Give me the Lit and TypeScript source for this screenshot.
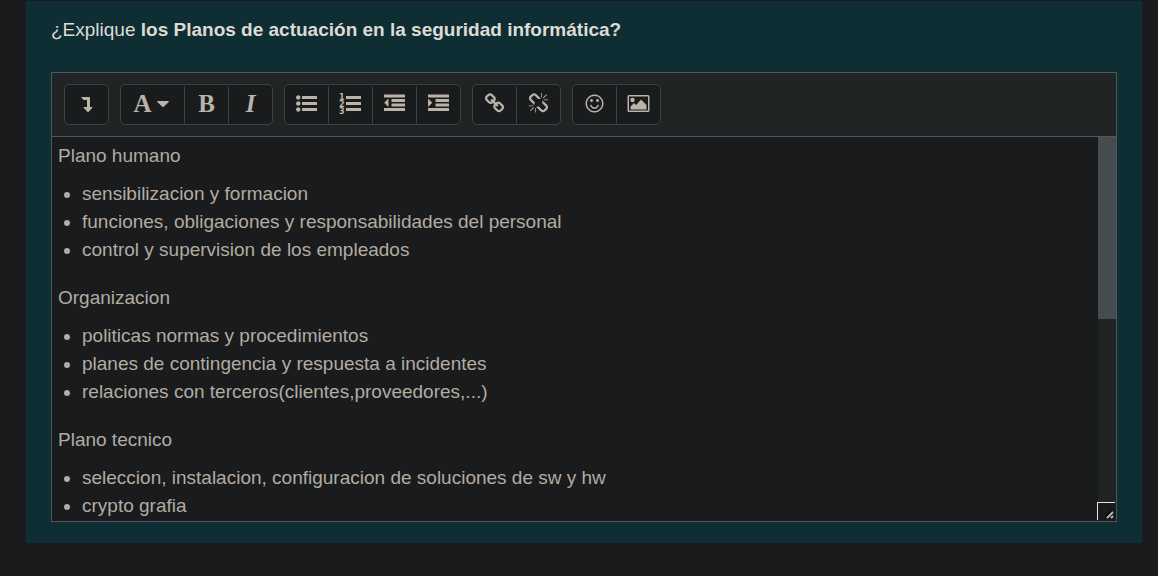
import { LitElement, html, css, svg } from "lit";
import { customElement } from "lit/decorators.js";

const BARS =
  "M1792 1312v192q0 13-9.5 22.5t-22.5 9.5h-1728q-13 0-22.5-9.5t-9.5-22.5v-192q0-13 9.5-22.5t22.5-9.5h1728q13 0 22.5 9.5t9.5 22.5zm0-384v192q0 13-9.5 22.5t-22.5 9.5h-1088q-13 0-22.5-9.5t-9.5-22.5v-192q0-13 9.5-22.5t22.5-9.5h1088q13 0 22.5 9.5t9.5 22.5zm0-384v192q0 13-9.5 22.5t-22.5 9.5h-1088q-13 0-22.5-9.5t-9.5-22.5v-192q0-13 9.5-22.5t22.5-9.5h1088q13 0 22.5 9.5t9.5 22.5zm0-384v192q0 13-9.5 22.5t-22.5 9.5h-1728q-13 0-22.5-9.5t-9.5-22.5v-192q0-13 9.5-22.5t22.5-9.5h1728q13 0 22.5 9.5t9.5 22.5z";

const big = (d: string) => svg`<path transform="scale(0.01171875)" d=${d} />`;

const icons = {
  expand: svg`<path d="M5 4h8.500q.500 0 .500.500V14h2q.800 0 .400.700L12.500 19q-.500.500-1 0L7.600 14.700Q7.200 14 8 14h3V7H7.500z" />`,
  ul: big(
    "M384 1408q0 80-56 136t-136 56-136-56-56-136 56-136 136-56 136 56 56 136zm0-512q0 80-56 136t-136 56-136-56-56-136 56-136 136-56 136 56 56 136zm1408 416v192q0 13-9.5 22.5t-22.5 9.5h-1216q-13 0-22.5-9.5t-9.5-22.5v-192q0-13 9.5-22.5t22.5-9.5h1216q13 0 22.5 9.5t9.5 22.5zm-1408-928q0 80-56 136t-136 56-136-56-56-136 56-136 136-56 136 56 56 136zm1408 416v192q0 13-9.5 22.5t-22.5 9.5h-1216q-13 0-22.5-9.5t-9.5-22.5v-192q0-13 9.5-22.5t22.5-9.5h1216q13 0 22.5 9.5t9.5 22.5zm0-512v192q0 13-9.5 22.5t-22.5 9.5h-1216q-13 0-22.5-9.5t-9.5-22.5v-192q0-13 9.5-22.5t22.5-9.5h1216q13 0 22.5 9.5t9.5 22.5z"
  ),
  ol: svg`<path d="M6 3h15v3H6zM6 9h15v3H6zM6 15h15v3H6z" /><text class="digit" x="-1" y="7">1</text><text class="digit" x="-1" y="14">2</text><text class="digit" x="-1" y="21">3</text>`,
  outdent: big(
    "M384 544v576q0 13-9.5 22.5t-22.5 9.5q-14 0-23-9l-288-288q-9-9-9-23t9-23l288-288q9-9 23-9 13 0 22.5 9.5t9.5 22.5z" + BARS
  ),
  indent: big(
    "M352 832q0 14-9 23l-288 288q-9 9-23 9-13 0-22.5-9.5t-9.5-22.5v-576q0-13 9.5-22.5t22.5-9.5q14 0 23 9l288 288q9 9 9 23z" + BARS
  ),
  link: big(
    "M1520 1216q0-40-28-68l-208-208q-28-28-68-28-42 0-72 32 3 3 19 18.5t21.5 21.5 15 19 13 25.500 3.500 27.500q0 40-28 68t-68 28q-15 0-27.500-3.500t-25.500-13-19-15-21.500-21.500-18.500-19q-33 31-33 73 0 40 28 68l206 207q27 27 68 27 40 0 68-26l147-146q28-28 28-67zm-703-705q0-40-28-68l-206-207q-28-28-68-28-39 0-68 27l-147 146q-28 28-28 67 0 40 28 68l208 208q27 27 68 27 42 0 72-31-3-3-19-18.500t-21.500-21.500-15-19-13-25.500-3.500-27.500q0-40 28-68t68-28q15 0 27.500 3.500t25.500 13 19 15 21.500 21.500 18.500 19q33-31 33-73zm895 705q0 120-85 203l-147 146q-83 83-203 83-121 0-204-85l-206-207q-83-83-83-203 0-123 88-209l-88-88q-86 88-208 88-120 0-204-84l-208-208q-84-84-84-204t85-203l147-146q83-83 203-83 121 0 204 85l206 207q83 83 83 203 0 123-88 209l88 88q86-88 208-88 120 0 204 84l208 208q84 84 84 204z"
  ),
  unlink: big(
    "M503 1271l-256 256q-10 9-23 9-12 0-23-9-9-10-9-23t9-23l256-256q10-9 23-9t23 9q9 10 9 23t-9 23zm169 41v320q0 14-9 23t-23 9-23-9-9-23v-320q0-14 9-23t23-9 23 9 9 23zm-224-224q0 14-9 23t-23 9h-320q-14 0-23-9t-9-23 9-23 23-9h320q14 0 23 9t9 23zm1264 128q0 120-85 203l-147 146q-83 83-203 83-121 0-204-85l-334-335q-21-21-42-56l239-18 273 274q28 28 68 27.500t68-27.500l147-146q28-28 28-67 0-40-28-68l-274-275 18-239q35 21 56 42l336 336q84 86 84 204zm-617-724l-239 18-273-274q-28-28-68-28-39 0-68 27l-147 146q-28 28-28 67 0 40 28 68l274 274-18 240q-35-21-56-42l-336-336q-84-86-84-204 0-120 85-203l147-146q83-83 203-83 121 0 204 85l334 335q21 21 42 56zm633 84q0 14-9 23t-23 9h-320q-14 0-23-9t-9-23 9-23 23-9h320q14 0 23 9t9 23zm-544-544v320q0 14-9 23t-23 9-23-9-9-23v-320q0-14 9-23t23-9 23 9 9 23zm407 151l-256 256q-11 9-23 9t-23-9q-9-10-9-23t9-23l256-256q10-9 23-9t23 9q9 10 9 23t-9 23z"
  ),
  smile: big(
    "M1262 1075q-37 121-138 195t-228 74-228-74-138-195q-8-25 4-48.500t38-31.500q25-8 48.500 4t31.500 38q25 80 92.500 129.500t151.500 49.500 151.500-49.500 92.500-129.500q8-26 32-38t49-4 37 31.500 4 48.500zm-494-435q0 53-37.500 90.500t-90.500 37.500-90.500-37.500-37.500-90.500 37.500-90.500 90.500-37.500 90.500 37.500 37.500 90.500zm512 0q0 53-37.500 90.500t-90.500 37.500-90.500-37.500-37.500-90.500 37.500-90.500 90.500-37.500 90.500 37.500 37.500 90.500zm256 256q0-130-51-248.500t-136.500-204-204-136.500-248.500-51-248.500 51-204 136.500-136.500 204-51 248.500 51 248.500 136.500 204 204 136.500 248.500 51 248.500-51 204-136.500 136.500-204 51-248.500zm128 0q0 209-103 385.500t-279.500 279.500-385.500 103-385.500-103-279.500-279.500-103-385.500 103-385.500 279.500-279.500 385.500-103 385.500 103 279.500 279.500 103 385.500z"
  ),
  image: svg`<path fill-rule="evenodd" d="M1 2h19q1.500 0 1.500 1.500v14q0 1.500-1.500 1.500H1q-1.500 0-1.500-1.500v-14Q-.500 2 1 2zm0 1.500v14h19v-14z" /><circle cx="4.500" cy="7" r="2.200" /><path d="M2.500 16.500v-3l3.500-3.500 2 2 5-5.500 5.500 5.500v4.500z" />`,
};

type Icon = keyof typeof icons;

const sections = [
  {
    title: "Plano humano",
    items: [
      "sensibilizacion y formacion",
      "funciones, obligaciones y responsabilidades del personal",
      "control y supervision de los empleados",
    ],
  },
  {
    title: "Organizacion",
    items: [
      "politicas normas y procedimientos",
      "planes de contingencia y respuesta a incidentes",
      "relaciones con terceros(clientes,proveedores,...)",
    ],
  },
  {
    title: "Plano tecnico",
    items: [
      "seleccion, instalacion, configuracion de soluciones de sw y hw",
      "crypto grafia",
    ],
  },
];

@customElement("app-root")
export class AppRoot extends LitElement {
  static styles = css`
    :host {
      display: block;
      box-sizing: border-box;
      min-height: 100vh;
      padding: 1px 16px 32px 26px;
      background: #1a1b1d;
      color: #b2aca2;
      font: 19px/28px "Liberation Sans", Arial, sans-serif;
    }
    * {
      box-sizing: border-box;
    }
    .question {
      padding: 15px 25px 21px;
      background: #0f2e33;
    }
    .prompt {
      margin: 0 0 28px;
      color: #dedbd6;
      font-size: inherit;
      font-weight: 400;
    }
    .editor {
      border: 1px solid #50565a;
      background: #1a1b1d;
    }
    .toolbar {
      display: flex;
      flex-wrap: wrap;
      gap: 11px;
      padding: 11px 12px;
      border-bottom: 1px solid #50565a;
      background: #202425;
    }
    .group {
      display: flex;
      padding-top: 1px;
      border: 1px solid #3a4344;
      border-radius: 5px;
      background: #1a1b1d;
    }
    .tool {
      display: flex;
      align-items: center;
      justify-content: center;
      gap: 5px;
      width: 43px;
      height: 38px;
      padding: 0 0 3px;
      border: 0;
      background: none;
      color: #b9b3a8;
      font: bold 25px/25px "Liberation Serif", "Times New Roman", serif;
      cursor: pointer;
    }
    .tool + .tool {
      width: 44px;
      border-left: 1px solid #3a4344;
    }
    .tool.wide {
      width: 63px;
      padding-right: 3px;
    }
    .slanted {
      font-style: italic;
    }
    .icon {
      display: block;
      width: 21px;
      height: 21px;
      overflow: visible;
      fill: currentColor;
    }
    .caret {
      width: 12px;
      height: 6px;
      fill: currentColor;
    }
    .digit {
      font: bold 8px/8px "DejaVu Sans", sans-serif;
    }
    .body {
      display: flex;
      height: 384px;
    }
    .content {
      flex: 1;
      min-width: 0;
      padding: 5px 6px 0;
      overflow: hidden;
      outline: 0;
    }
    .title {
      margin: 0 0 10px;
    }
    .list {
      margin: 0 0 20px;
      padding-left: 24px;
    }
    .rail {
      display: flex;
      flex-direction: column;
      justify-content: space-between;
      width: 18px;
      background: #202425;
    }
    .thumb {
      height: 182px;
      background: #464b4f;
    }
    .corner {
      margin-left: -1px;
      padding: 0 1px 1px 0;
      background: #1a1b1d;
    }
    .grip {
      border-top: 1px solid #e8e6e3;
      border-left: 1px solid #e8e6e3;
    }
    .grip-lines {
      display: block;
      width: 17px;
      height: 17px;
    }
  `;

  private tool(label: string, icon: Icon) {
    return html`<button class="tool" type="button" aria-label=${label}>
      <svg class="icon" viewBox="0 0 21 21" aria-hidden="true">${icons[icon]}</svg>
    </button>`;
  }

  render() {
    return html`
      <section class="question">
        <h1 class="prompt">¿Explique <b>los Planos de actuación en la seguridad informática?</b></h1>
        <div class="editor">
          <div class="toolbar" role="toolbar" aria-label="Formato">
            <div class="group">${this.tool("Mostrar más botones", "expand")}</div>
            <div class="group">
              <button class="tool wide" type="button" aria-label="Estilos de párrafo">
                <span>A</span>
                <svg class="caret" viewBox="0 0 12 6" aria-hidden="true">
                  <path d="M.7 0h10.600q1 .2.4 1L6.700 5.700q-.7.600-1.400 0L.3 1Q-.3.2.7 0z" />
                </svg>
              </button>
              <button class="tool" type="button" aria-label="Negrita">B</button>
              <button class="tool slanted" type="button" aria-label="Cursiva">I</button>
            </div>
            <div class="group">
              ${this.tool("Lista sin orden", "ul")} ${this.tool("Lista ordenada", "ol")}
              ${this.tool("Reducir sangría", "outdent")} ${this.tool("Aumentar sangría", "indent")}
            </div>
            <div class="group">${this.tool("Enlace", "link")} ${this.tool("Quitar enlace", "unlink")}</div>
            <div class="group">${this.tool("Emoticono", "smile")} ${this.tool("Imagen", "image")}</div>
          </div>
          <div class="body">
            <div class="content" contenteditable="true" spellcheck="false" role="textbox" aria-multiline="true" aria-label="Respuesta">
              ${sections.map(
                (s) => html`<p class="title">${s.title}</p>
                  <ul class="list">
                    ${s.items.map((item) => html`<li>${item}</li>`)}
                  </ul>`
              )}
            </div>
            <div class="rail" aria-hidden="true">
              <div class="thumb"></div>
              <div class="corner">
                <div class="grip">
                  <svg class="grip-lines" viewBox="0 0 17 17">
                    <path d="M7.500 14L14 8M10 15l4-4" stroke="#080808" stroke-width="2" />
                    <path d="M9 15l6-6M13 15l2-2" stroke="#b8b8b8" stroke-width="2" />
                  </svg>
                </div>
              </div>
            </div>
          </div>
        </div>
      </section>
    `;
  }
}
